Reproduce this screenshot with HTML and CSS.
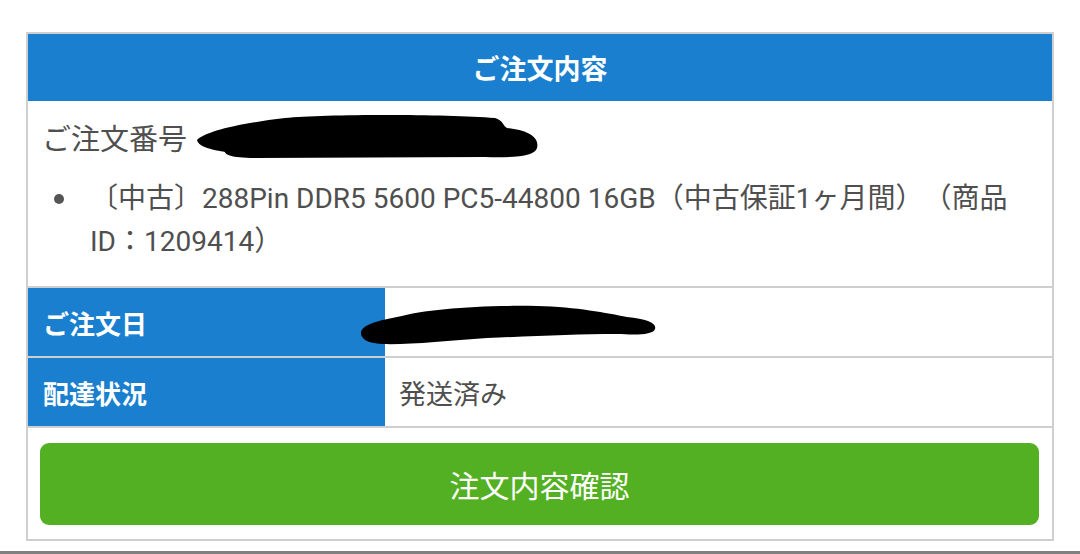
FILE: index.html
```html
<!DOCTYPE html>
<html lang="ja">
<head>
<meta charset="utf-8">
<link rel="stylesheet" href="styles.css">
</head>
<body>
<div class="card">
  <div class="card-head">ご注文内容</div>
  <div class="order">
    <div class="order-no">ご注文番号<span class="redact redact-1"><svg viewBox="0 0 345 48" width="345" height="48"><path d="M2 28 C 10 20, 40 12, 90 6 C 130 2, 250 2, 300 6 C 308 8, 308 14, 312 16 C 330 18, 345 24, 342 36 C 340 44, 320 46, 290 45 L 60 46 C 35 46, 30 42, 30 40 C 20 38, 4 36, 2 28 Z" fill="#000"/></svg></span></div>
    <ul class="items">
      <li>〔中古〕288Pin DDR5 5600 PC5-44800 16GB（中古保証1ヶ月間）（商品ID：1209414）</li>
    </ul>
  </div>
  <div class="row">
    <div class="label">ご注文日</div>
    <div class="value"><span class="redact redact-2"><svg viewBox="0 0 300 42" width="300" height="42"><path d="M4 30 C 4 22, 20 18, 40 14 C 70 6, 120 2, 180 3 C 220 4, 250 10, 270 14 C 290 16, 300 20, 298 26 C 296 32, 280 32, 260 31 C 220 31, 180 33, 130 35 C 90 38, 50 42, 25 41 C 10 40, 4 36, 4 30 Z" fill="#000"/></svg></span></div>
  </div>
  <div class="row">
    <div class="label">配達状況</div>
    <div class="value">発送済み</div>
  </div>
  <div class="actions">
    <a class="btn">注文内容確認</a>
  </div>
</div>
<div class="bottom-line"></div>
</body>
</html>
```
FILE: styles.css
```css
html, body {
  margin: 0;
  padding: 0;
  background: #fff;
}
body {
  font-family: Roboto, "Noto Sans CJK JP", sans-serif;
  color: #4f4f4f;
  width: 1080px;
  height: 554px;
  overflow: hidden;
  text-spacing-trim: space-all;
}
.card {
  margin: 32px 26px 0 26px;
  border: 2px solid #cfcfcf;
  background: #fff;
}
.card-head {
  height: 67px;
  background: #1b7fcf;
  color: #fff;
  font-weight: 700;
  font-size: 27px;
  display: flex;
  align-items: center;
  justify-content: center;
}
.order {
  padding: 19px 16px 23px 14px;
}
.order-no {
  font-size: 29px;
  line-height: 40px;
  position: relative;
  display: flex;
  align-items: center;
}
.redact {
  position: absolute;
  display: block;
}
.redact svg { display: block; }
.redact-1 {
  left: 153px;
  top: -8px;
}
.items {
  margin: 17px 0 0 0;
  padding: 0 0 0 48px;
  font-size: 28px;
  line-height: 43px;
  list-style: none;
}
.items li {
  position: relative;
}
.items li::before {
  content: "";
  position: absolute;
  left: -36px;
  top: 17px;
  width: 10px;
  height: 10px;
  border-radius: 50%;
  background: #555;
}
.row {
  display: flex;
  height: 68px;
  border-top: 2px solid #cfcfcf;
}
.label {
  width: 357px;
  flex: none;
  background: #1b7fcf;
  color: #fff;
  font-weight: 700;
  font-size: 26px;
  display: flex;
  align-items: center;
  padding-left: 15px;
  box-sizing: border-box;
}
.value {
  flex: 1;
  display: flex;
  align-items: center;
  padding-left: 14px;
  font-size: 27px;
  position: relative;
}
.redact-2 {
  left: -28px;
  top: 15px;
}
.actions {
  border-top: 2px solid #cfcfcf;
  padding: 15px 13px 14px 12px;
}
.btn {
  display: flex;
  height: 82px;
  align-items: center;
  justify-content: center;
  background: #53b023;
  border-radius: 9px;
  color: #fff;
  font-size: 30px;
}
.bottom-line {
  margin-top: 10px;
  height: 3px;
  background: #808080;
}
```
